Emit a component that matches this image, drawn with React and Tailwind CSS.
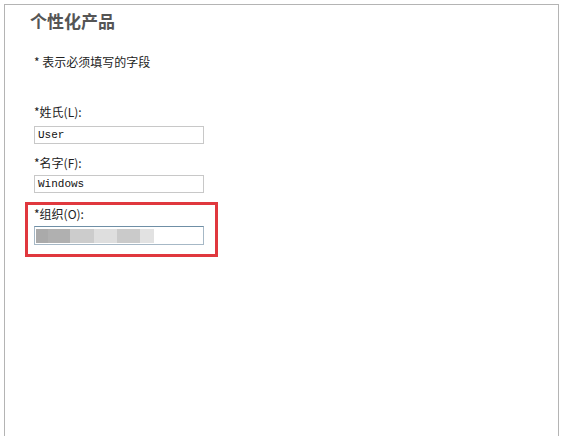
export default function App() {
  const blur = [
    ['w-[12px]', 'bg-[#aaaaaa]'],
    ['w-[22px]', 'bg-[#b0b0b0]'],
    ['w-[24px]', 'bg-[#cccccc]'],
    ['w-[23px]', 'bg-[#dedede]'],
    ['w-[23px]', 'bg-[#cacaca]'],
    ['w-[14px]', 'bg-[#e2e2e2]'],
  ];
  return (
    <div className="h-[436px] w-[567px] overflow-hidden bg-white pl-[4px] pt-[4px] font-['Noto_Sans_CJK_SC',sans-serif]">
      <div className="h-[440px] w-[555px] border-l border-r border-t border-[#b4b4b4] pl-[25px] pt-[5px]">
        <h1 className="text-[17px] font-bold leading-[22px] text-[#555555]">个性化产品</h1>
        <p className="mt-[22px] pl-[4px] text-[12px] leading-[16px] text-[#222]">* 表示必须填写的字段</p>
        <div className="mt-[34px] pl-[4px] text-[12px] leading-[16px] text-[#222]">*姓氏(L):</div>
        <div className="ml-[4px] mt-[6px] flex h-[18px] w-[170px] items-center border border-[#c8c8c8] pl-[3px] font-['Liberation_Mono',monospace] text-[11px] text-[#111]">User</div>
        <div className="mt-[11px] pl-[4px] text-[12px] leading-[16px] text-[#222]">*名字(F):</div>
        <div className="ml-[4px] mt-[4px] flex h-[18px] w-[170px] items-center border border-[#c8c8c8] pl-[3px] font-['Liberation_Mono',monospace] text-[11px] text-[#111]">Windows</div>
        <div className="ml-[-5px] mt-[9px] w-[193px] border-[3px] border-[#e0383e] pb-[9px] pl-[6px] pt-[1px]">
          <div className="text-[12px] leading-[16px] text-[#222]">*组织(O):</div>
          <div className="mt-[4px] flex h-[19px] w-[170px] items-center border border-[#a6b8c6] border-t-[#6f8fa6] pl-[1px]">
            {blur.map(([w, c], i) => (
              <div key={i} className={`h-[14px] ${w} ${c}`} />
            ))}
          </div>
        </div>
      </div>
    </div>
  );
}
